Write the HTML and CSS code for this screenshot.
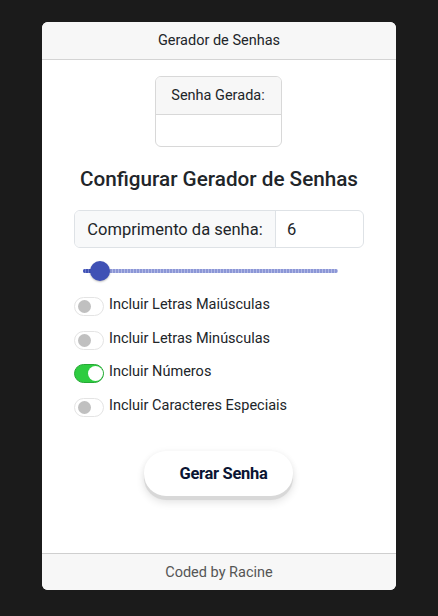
FILE: index.html
```html
<!DOCTYPE html>
<html lang="pt">
<head>
<meta charset="utf-8">
<link rel="stylesheet" href="styles.css">
</head>
<body>
<div class="card">
  <div class="card-header">Gerador de Senhas</div>
  <div class="card-body">
    <div class="result">
      <div class="result-head">Senha Gerada:</div>
      <div class="result-body"></div>
    </div>
    <h2 class="title">Configurar Gerador de Senhas</h2>
    <div class="input-group">
      <span class="ig-label">Comprimento da senha:</span>
      <span class="ig-value">6</span>
    </div>
    <div class="slider">
      <div class="track"><div class="fill"></div></div>
      <div class="thumb"></div>
    </div>
    <div class="options">
      <div class="opt"><span class="switch"></span><span class="opt-label">Incluir Letras Maiúsculas</span></div>
      <div class="opt"><span class="switch"></span><span class="opt-label">Incluir Letras Minúsculas</span></div>
      <div class="opt"><span class="switch on"></span><span class="opt-label">Incluir Números</span></div>
      <div class="opt"><span class="switch"></span><span class="opt-label">Incluir Caracteres Especiais</span></div>
    </div>
    <div class="btn-wrap"><button class="btn">Gerar Senha</button></div>
  </div>
  <div class="card-footer">Coded by Racine</div>
</div>
</body>
</html>
```

FILE: styles.css
```css
html, body { margin: 0; padding: 0; }
body {
  background: #1b1b1b;
  font-family: Roboto, "Liberation Sans", sans-serif;
  color: #212529;
  padding-top: 22px;
}
.card {
  width: 354px;
  margin: 0 auto;
  background: #fff;
  border-radius: 6px;
  overflow: hidden;
  display: flex;
  flex-direction: column;
}
.card-header {
  background: #f7f7f7;
  border-bottom: 1px solid #d4d4d4;
  font-size: 14.5px;
  display: flex;
  align-items: center;
  justify-content: center;
  box-sizing: border-box;
  height: 38px;
  padding-bottom: 1px;
}
.card-body {
  height: 493px;
  display: flex;
  flex-direction: column;
  align-items: center;
  padding-top: 16px;
  box-sizing: border-box;
}
.result {
  width: 127px;
  height: 71px;
  border: 1px solid #d8d8d8;
  border-radius: 6px;
  overflow: hidden;
  box-sizing: border-box;
  display: flex;
  flex-direction: column;
  margin-left: -2px;
}
.result-head {
  height: 37px;
  background: #f7f7f7;
  border-bottom: 1px solid #d8d8d8;
  font-size: 14.5px;
  display: flex;
  align-items: center;
  justify-content: center;
}
.result-body { flex: 1; }
.title {
  font-size: 20.7px;
  font-weight: 500;
  margin: 20px 0 0;
  line-height: 24px;
  color: #212529;
}
.input-group {
  margin-top: 19px;
  width: 290px;
  height: 38px;
  border: 1px solid #dee2e6;
  border-radius: 6px;
  box-sizing: border-box;
  display: flex;
  overflow: hidden;
  font-size: 16.5px;
}
.ig-label {
  width: 200px;
  background: #f8f9fa;
  border-right: 1px solid #dee2e6;
  display: flex;
  align-items: center;
  justify-content: center;
  color: #212529;
}
.ig-value {
  flex: 1;
  display: flex;
  align-items: center;
  padding-left: 11px;
}
.slider {
  position: relative;
  width: 255px;
  height: 20px;
  margin-top: 13px;
  margin-left: -17px;
  display: flex;
  align-items: center;
}
.track {
  width: 100%;
  height: 4px;
  border-radius: 2px;
  background: repeating-linear-gradient(90deg, #8c97d6 0 2px, #b1b8e6 2px 3px);
  position: relative;
}
.fill {
  width: 17px;
  height: 100%;
  background: repeating-linear-gradient(90deg, #3f51b5 0 2px, #6c7acb 2px 3px);
  border-radius: 2px;
}
.thumb {
  position: absolute;
  left: 7px;
  top: 0;
  width: 20px;
  height: 20px;
  border-radius: 50%;
  background: #3f51b5;
  box-shadow: 0 1px 2px rgba(0,0,0,0.25);
}
.options {
  align-self: stretch;
  padding-left: 32px;
  margin-top: 15px;
  display: flex;
  flex-direction: column;
  gap: 15.5px;
}
.opt {
  display: flex;
  align-items: flex-start;
  gap: 5px;
  font-size: 14.5px;
  line-height: 17px;
  height: 18px;
}
.switch {
  width: 30px;
  height: 19px;
  border: 1px solid #e4e4e4;
  border-radius: 10px;
  box-sizing: border-box;
  background: #fff;
  position: relative;
  margin-top: 1px;
  flex: none;
}
.switch::after {
  content: "";
  position: absolute;
  left: 3px;
  top: 2px;
  width: 13px;
  height: 13px;
  border-radius: 50%;
  background: #c0c0c0;
}
.switch.on {
  background: #2ecc40;
  border-color: #27a836;
}
.switch.on::after {
  left: 13px;
  top: 1px;
  width: 15px;
  height: 15px;
  background: #fff;
}
.btn-wrap {
  margin-top: 36px;
}
.btn {
  width: 149px;
  height: 45px;
  border: none;
  border-radius: 22px;
  background: #fff;
  font-family: Roboto, "Liberation Sans", sans-serif;
  font-weight: 700;
  font-size: 16.5px;
  color: #0b1533;
  padding-left: 16px;
  letter-spacing: -0.3px;
  box-shadow: 0 4px 0 #d8d8d8, 0 6px 8px rgba(0,0,0,0.12), 0 0 6px rgba(0,0,0,0.05);
  margin-left: -1px;
}
.card-footer {
  height: 37px;
  background: #f7f7f7;
  border-top: 1px solid #cfcfcf;
  font-size: 14.5px;
  color: #555;
  display: flex;
  align-items: center;
  justify-content: center;
  box-sizing: border-box;
}
```
